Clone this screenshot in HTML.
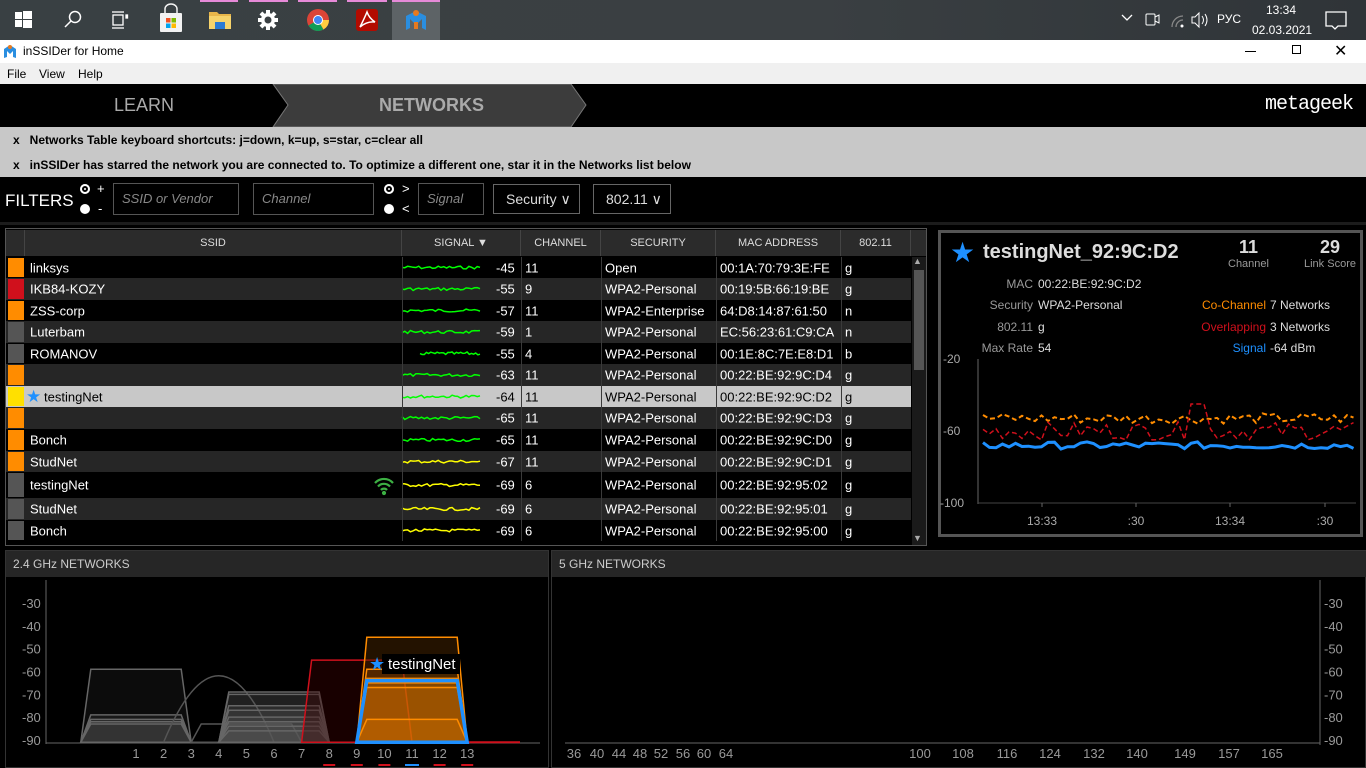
<!DOCTYPE html>
<html><head><meta charset="utf-8">
<style>
*{margin:0;padding:0;box-sizing:border-box}
body{width:1366px;height:768px;overflow:hidden;background:#000;font-family:"Liberation Sans",Arial,sans-serif;position:relative;color:#fff}
.a{position:absolute}
.t{position:absolute;white-space:nowrap}
.hdr{position:absolute;top:230px;height:26px;background:#2b2b2b;color:#ddd;font-size:11px;line-height:26px;text-align:center;border-right:1px solid #444}
.inp{position:absolute;top:183px;height:32px;border:1px solid #555;color:#888;font-style:italic;font-size:13px;line-height:30px;padding-left:8px}
.sel{position:absolute;top:184px;height:30px;border:1px solid #666;color:#ddd;font-size:14px;line-height:28px;padding-left:12px}
.row{position:absolute;left:6px;width:905px;font-size:13px;color:#fff}
.row span{position:absolute;top:50%;transform:translateY(-50%);white-space:nowrap}
</style></head><body>
<div class="a" style="left:0;top:0;width:1366px;height:40px;background:linear-gradient(90deg,#394043,#3a3f42 60%,#2f3438)"></div>
<div class="a" style="left:200px;top:0;width:38px;height:2px;background:#e68ad8"></div>
<div class="a" style="left:249px;top:0;width:39px;height:2px;background:#e68ad8"></div>
<div class="a" style="left:298px;top:0;width:39px;height:2px;background:#e68ad8"></div>
<div class="a" style="left:347px;top:0;width:40px;height:2px;background:#e68ad8"></div>
<div class="a" style="left:392px;top:0;width:48px;height:40px;background:#5d6366;border-top:2px solid #e68ad8"></div>
<svg class="a" style="left:0;top:0" width="460" height="40">
<g fill="#fff"><rect x="15" y="12" width="7" height="7"/><rect x="23" y="11" width="9" height="8"/><rect x="15" y="20" width="7" height="7"/><rect x="23" y="20" width="9" height="8"/></g>
<circle cx="75" cy="17" r="5.5" fill="none" stroke="#fff" stroke-width="1.5"/><line x1="71" y1="21" x2="65" y2="27" stroke="#fff" stroke-width="1.5"/>
<g stroke="#fff" stroke-width="1.3" fill="none"><rect x="113" y="15" width="10" height="10"/><line x1="112" y1="12" x2="124" y2="12"/><line x1="112" y1="28" x2="124" y2="28"/><rect x="126" y="15" width="1.5" height="3" fill="#fff"/></g>
<rect x="160" y="13" width="22" height="19" rx="1" fill="#f2f2f2"/><path d="M165 13 v-4 a6 5 0 0 1 12 0 v4" stroke="#f2f2f2" stroke-width="1.5" fill="none"/>
<rect x="166" y="18" width="4.5" height="4.5" fill="#f25022"/><rect x="171.5" y="18" width="4.5" height="4.5" fill="#7fba00"/><rect x="166" y="23.5" width="4.5" height="4.5" fill="#00a4ef"/><rect x="171.5" y="23.5" width="4.5" height="4.5" fill="#ffb900"/>
<path d="M209 12 h8 l2 2 h12 v15 h-22z" fill="#e8b64a"/><rect x="209" y="16" width="22" height="13" fill="#f6d36b"/><rect x="215" y="22" width="10" height="7" fill="#2a7ad4"/>
<g transform="translate(268,20)" fill="#fff"><circle r="7"/><g><rect x="-2" y="-10" width="4" height="20"/><rect x="-10" y="-2" width="20" height="4"/><rect x="-2" y="-10" width="4" height="20" transform="rotate(45)"/><rect x="-2" y="-10" width="4" height="20" transform="rotate(-45)"/></g><circle r="3.5" fill="#3a4043"/></g>
<circle cx="318" cy="20" r="11" fill="#db4437"/><path d="M318 20 L308.5 25.5 A11 11 0 0 0 323.5 29.5z" fill="#0f9d58"/><path d="M318 20 L323.5 29.5 A11 11 0 0 0 329 20z" fill="#ffcd40"/><circle cx="318" cy="20" r="5" fill="#fff"/><circle cx="318" cy="20" r="4" fill="#4285f4"/>
<rect x="356" y="9" width="22" height="22" rx="3" fill="#b30b00"/><path d="M360 27 q5 -10 7 -15 q2 6 8 10 q-8 -1 -15 5z" fill="none" stroke="#fff" stroke-width="1.5"/>
<path d="M406 30 v-14 l10 -5 l10 5 v14 l-4 -2 v-9 l-6 6 l-6 -6 v9z" fill="#2a8ee0"/><circle cx="416" cy="13" r="3" fill="#e87a1e"/><rect x="414" y="22" width="4" height="7" fill="#e87a1e"/>
</svg>
<svg class="a" style="left:1100px;top:0" width="266" height="40">
<path d="M22 15 l5 5 l5 -5" stroke="#fff" fill="none" stroke-width="1.3"/>
<rect x="46" y="14" width="9" height="11" rx="1" stroke="#fff" fill="none"/><path d="M55 17 l4 -2 v8 l-4 -2" stroke="#fff" fill="none"/>
<path d="M72 27 a11 11 0 0 1 11 -11 M76 27 a7 7 0 0 1 7 -7" stroke="#888" fill="none" stroke-width="1.3"/><circle cx="82" cy="26" r="1.5" fill="#fff"/>
<path d="M92 17 h3 l4 -4 v14 l-4 -4 h-3z" stroke="#fff" fill="none"/><path d="M102 16 q3 4 0 8 M105 14 q4 6 0 12" stroke="#fff" fill="none"/>
<path d="M226 12 h20 v14 h-8 l-3 3 l-3 -3 h-6z" stroke="#fff" fill="none" stroke-width="1.3"/>
</svg>
<div class="t" style="left:1217px;top:12px;font-size:12px;color:#fff">РУС</div>
<div class="t" style="left:1266px;top:3px;font-size:12px;color:#fff">13:34</div>
<div class="t" style="left:1252px;top:23px;font-size:12px;color:#fff">02.03.2021</div>
<div class="a" style="left:0;top:40px;width:1366px;height:23px;background:#fff"></div>
<svg class="a" style="left:3px;top:43px" width="14" height="16"><path d="M1 15 v-9 l6 -4 l6 4 v9 l-3 -1 v-6 l-3 3 l-3 -3 v6z" fill="#2a8ee0"/><circle cx="7" cy="4" r="2" fill="#e87a1e"/></svg>
<div class="t" style="left:23px;top:44px;font-size:12px;color:#000">inSSIDer for Home</div>
<div class="a" style="left:1245px;top:51px;width:11px;height:1px;background:#000"></div>
<div class="a" style="left:1292px;top:45px;width:9px;height:9px;border:1px solid #000"></div>
<div class="t" style="left:1334px;top:41px;font-size:16px;color:#000">✕</div>
<div class="a" style="left:0;top:63px;width:1366px;height:21px;background:#f0f0f0"></div>
<div class="t" style="left:7px;top:67px;font-size:12px;color:#000">File</div>
<div class="t" style="left:39px;top:67px;font-size:12px;color:#000">View</div>
<div class="t" style="left:78px;top:67px;font-size:12px;color:#000">Help</div>
<svg class="a" style="left:0;top:84px" width="1366" height="43"><polygon points="273,0 571,0 586,21 571,43 273,43 288,21" fill="#3c3c3c" stroke="#777" stroke-width="1"/></svg>
<div class="t" style="left:114px;top:95px;font-size:18px;color:#aaa">LEARN</div>
<div class="t" style="left:379px;top:95px;font-size:18px;color:#aaa;font-weight:bold">NETWORKS</div>
<div class="t" style="left:1265px;top:93px;font-size:20px;color:#fff;font-family:'Liberation Mono',monospace;letter-spacing:-1px">metageek</div>
<div class="a" style="left:0;top:127px;width:1366px;height:50px;background:#c8c8c8"></div>
<div class="t" style="left:13px;top:133px;font-size:12px;color:#000;font-weight:bold">x&nbsp;&nbsp;&nbsp;Networks Table keyboard shortcuts: j=down, k=up, s=star, c=clear all</div>
<div class="t" style="left:13px;top:158px;font-size:12px;color:#000;font-weight:bold">x&nbsp;&nbsp;&nbsp;inSSIDer has starred the network you are connected to. To optimize a different one, star it in the Networks list below</div>
<div class="t" style="left:5px;top:191px;font-size:17px;color:#fff">FILTERS</div>
<div class="a" style="left:80px;top:184px;width:10px;height:10px;border-radius:50%;background:#fff;box-shadow:inset 0 0 0 2px #fff,inset 0 0 0 4px #000"></div>
<div class="a" style="left:80px;top:204px;width:10px;height:10px;border-radius:50%;background:#fff"></div>
<div class="t" style="left:97px;top:181px;font-size:13px;color:#fff">+</div>
<div class="t" style="left:98px;top:201px;font-size:13px;color:#fff">-</div>
<div class="inp" style="left:113px;width:126px">SSID or Vendor</div>
<div class="inp" style="left:253px;width:121px">Channel</div>
<div class="a" style="left:384px;top:184px;width:10px;height:10px;border-radius:50%;background:#fff;box-shadow:inset 0 0 0 2px #fff,inset 0 0 0 4px #000"></div>
<div class="a" style="left:384px;top:204px;width:10px;height:10px;border-radius:50%;background:#fff"></div>
<div class="t" style="left:402px;top:181px;font-size:13px;color:#fff">&gt;</div>
<div class="t" style="left:402px;top:201px;font-size:13px;color:#fff">&lt;</div>
<div class="inp" style="left:418px;width:66px">Signal</div>
<div class="sel" style="left:493px;width:87px">Security ∨</div>
<div class="sel" style="left:593px;width:78px">802.11 ∨</div>
<div class="a" style="left:0;top:222px;width:1366px;height:3px;background:#1c1c1c"></div>
<div class="a" style="left:5px;top:228px;width:922px;height:318px;border:1px solid #555;background:#000"></div>
<div class="hdr" style="left:6px;width:19px"></div>
<div class="hdr" style="left:25px;width:377px">SSID</div>
<div class="hdr" style="left:402px;width:119px">SIGNAL ▼</div>
<div class="hdr" style="left:521px;width:80px">CHANNEL</div>
<div class="hdr" style="left:601px;width:115px">SECURITY</div>
<div class="hdr" style="left:716px;width:125px">MAC ADDRESS</div>
<div class="hdr" style="left:841px;width:70px">802.11</div>
<div class="hdr" style="left:911px;width:15px;border:none"></div>
<div id="rows"></div>
<div class="a" style="left:912px;top:257px;width:14px;height:288px;background:#1a1a1a"></div>
<div class="a" style="left:914px;top:270px;width:10px;height:100px;background:#555"></div>
<div class="t" style="left:913px;top:256px;font-size:9px;color:#aaa">▲</div>
<div class="t" style="left:913px;top:533px;font-size:9px;color:#aaa">▼</div>
<div class="a" style="left:938px;top:230px;width:425px;height:307px;border:3px solid #555;background:#000"></div>
<div class="t" style="left:950px;top:236px;font-size:28px;color:#1e90ff">★</div>
<div class="t" style="left:983px;top:241px;font-size:20px;font-weight:bold;color:#ddd">testingNet_92:9C:D2</div>
<div class="t" style="left:1239px;top:237px;font-size:18px;font-weight:bold;color:#ddd">11</div>
<div class="t" style="left:1228px;top:258px;font-size:11px;color:#999">Channel</div>
<div class="t" style="left:1320px;top:237px;font-size:18px;font-weight:bold;color:#ddd">29</div>
<div class="t" style="left:1304px;top:258px;font-size:11px;color:#999">Link Score</div>
<div class="t" style="left:1005px;top:277px;font-size:12px;color:#999;width:28px;text-align:right">MAC</div>
<div class="t" style="left:1038px;top:277px;font-size:12px;color:#ddd">00:22:BE:92:9C:D2</div>
<div class="t" style="left:973px;top:298px;font-size:12px;color:#999;width:60px;text-align:right">Security</div>
<div class="t" style="left:1038px;top:298px;font-size:12px;color:#ddd">WPA2-Personal</div>
<div class="t" style="left:973px;top:320px;font-size:12px;color:#999;width:60px;text-align:right">802.11</div>
<div class="t" style="left:1038px;top:320px;font-size:12px;color:#ddd">g</div>
<div class="t" style="left:963px;top:341px;font-size:12px;color:#999;width:70px;text-align:right">Max Rate</div>
<div class="t" style="left:1038px;top:341px;font-size:12px;color:#ddd">54</div>
<div class="t" style="left:1166px;top:298px;font-size:12px;color:#ff8c00;width:100px;text-align:right">Co-Channel</div>
<div class="t" style="left:1270px;top:298px;font-size:12px;color:#ddd">7 Networks</div>
<div class="t" style="left:1166px;top:320px;font-size:12px;color:#d0101c;width:100px;text-align:right">Overlapping</div>
<div class="t" style="left:1270px;top:320px;font-size:12px;color:#ddd">3 Networks</div>
<div class="t" style="left:1166px;top:341px;font-size:12px;color:#1e90ff;width:100px;text-align:right">Signal</div>
<div class="t" style="left:1270px;top:341px;font-size:12px;color:#ddd">-64 dBm</div>
<svg id="rg" class="a" style="left:938px;top:340px" width="425" height="200"></svg>
<div class="a" style="left:5px;top:550px;width:544px;height:218px;border:1px solid #333;background:#000"></div>
<div class="a" style="left:6px;top:551px;width:542px;height:26px;background:#262626"></div>
<div class="t" style="left:13px;top:557px;font-size:12px;color:#ccc">2.4 GHz NETWORKS</div>
<div class="a" style="left:551px;top:550px;width:815px;height:218px;border:1px solid #333;background:#000"></div>
<div class="a" style="left:552px;top:551px;width:814px;height:26px;background:#262626"></div>
<div class="t" style="left:559px;top:557px;font-size:12px;color:#ccc">5 GHz NETWORKS</div>
<svg id="g24" class="a" style="left:0;top:0" width="1366" height="768"></svg>
<script>
var R=[[257,21,'#ff8c00','linksys','#0f0',-45,'11','Open','00:1A:70:79:3E:FE','g',0],
[278,22,'#d0101c','IKB84-KOZY','#0f0',-55,'9','WPA2-Personal','00:19:5B:66:19:BE','g',1],
[300,21,'#ff8c00','ZSS-corp','#0f0',-57,'11','WPA2-Enterprise','64:D8:14:87:61:50','n',0],
[321,22,'#555','Luterbam','#0f0',-59,'1','WPA2-Personal','EC:56:23:61:C9:CA','n',1],
[343,21,'#555','ROMANOV','#0f0',-55,'4','WPA2-Personal','00:1E:8C:7E:E8:D1','b',0],
[364,22,'#ff8c00','','#0f0',-63,'11','WPA2-Personal','00:22:BE:92:9C:D4','g',1],
[386,21,'#ffe000','testingNet','#0f0',-64,'11','WPA2-Personal','00:22:BE:92:9C:D2','g',2],
[407,22,'#ff8c00','','#0f0',-65,'11','WPA2-Personal','00:22:BE:92:9C:D3','g',1],
[429,22,'#ff8c00','Bonch','#0f0',-65,'11','WPA2-Personal','00:22:BE:92:9C:D0','g',0],
[451,21,'#ff8c00','StudNet','#ff0',-67,'11','WPA2-Personal','00:22:BE:92:9C:D1','g',1],
[472,26,'#555','testingNet','#ff0',-69,'6','WPA2-Personal','00:22:BE:92:95:02','g',0],
[498,22,'#555','StudNet','#ff0',-69,'6','WPA2-Personal','00:22:BE:92:95:01','g',1],
[520,21,'#555','Bonch','#ff0',-69,'6','WPA2-Personal','00:22:BE:92:95:00','g',0]];
var s=7;function rnd(){s=(s*9301+49297)%233280;return s/233280;}
var h='';
R.forEach(function(r,i){
 var sel=r[10]==2,bg=sel?'#c8c8c8':(r[10]?'#262626':'#000'),fc=sel?'#000':'#fff';
 var y=r[0],ht=r[1];
 h+='<div class="row" style="top:'+y+'px;height:'+ht+'px;background:'+bg+';color:'+fc+'">';
 h+='<div style="position:absolute;left:2px;top:1px;width:16px;height:'+(ht-2)+'px;background:'+r[2]+'"></div>';
 if(sel)h+='<span style="left:20px;color:#1e90ff;font-size:17px">★</span>';
 h+='<span style="left:'+(sel?38:24)+'px">'+r[3]+'</span>';
 var sx=(i==4)?18:0,pts=[],mid=ht/2;
 for(var k=0;k<=28;k++){var x=396+sx+k*(78-sx)/28;pts.push(x.toFixed(1)+','+(mid+(rnd()-0.5)*3).toFixed(1));}
 h+='<svg style="position:absolute;left:0;top:0" width="480" height="'+ht+'"><polyline points="'+pts.join(' ')+'" fill="none" stroke="'+r[4]+'" stroke-width="1.5"/>';
 if(i==10)h+='<g transform="translate(378,'+mid+')" fill="none" stroke="#3cb043" stroke-width="2.2"><path d="M-9 -2 a12 12 0 0 1 18 0"/><path d="M-6 1.5 a8 8 0 0 1 12 0"/><path d="M-3 5 a4 4 0 0 1 6 0"/><circle cy="8" r="1" fill="#3cb043"/></g>';
 h+='</svg>';
 h+='<span style="left:490px">'+r[5]+'</span><span style="left:519px">'+r[6]+'</span><span style="left:599px">'+r[7]+'</span><span style="left:714px">'+r[8]+'</span><span style="left:839px">'+r[9]+'</span>';
 h+='<div style="position:absolute;left:396px;top:0;width:1px;height:100%;background:#3a3a3a"></div><div style="position:absolute;left:515px;top:0;width:1px;height:100%;background:#3a3a3a"></div><div style="position:absolute;left:595px;top:0;width:1px;height:100%;background:#3a3a3a"></div><div style="position:absolute;left:710px;top:0;width:1px;height:100%;background:#3a3a3a"></div><div style="position:absolute;left:835px;top:0;width:1px;height:100%;background:#3a3a3a"></div>';
 h+='</div>';
});
document.getElementById('rows').innerHTML=h;
var g='';var oy=340;
function Y(d){return 359+(-20-d)*1.8-oy;}
g+='<line x1="40" y1="19" x2="40" y2="164" stroke="#666"/><line x1="40" y1="163" x2="418" y2="163" stroke="#444"/>';
g+='<text x="5" y="23" fill="#aaa" font-size="12" font-family="Liberation Sans">-20</text><text x="5" y="95" fill="#aaa" font-size="12" font-family="Liberation Sans">-60</text><text x="2" y="167" fill="#aaa" font-size="12" font-family="Liberation Sans">-100</text>';
[[104,'13:33'],[198,':30'],[292,'13:34'],[387,':30']].forEach(function(t){g+='<line x1="'+t[0]+'" y1="163" x2="'+t[0]+'" y2="167" stroke="#666"/><text x="'+t[0]+'" y="185" fill="#aaa" font-size="12" text-anchor="middle" font-family="Liberation Sans">'+t[1]+'</text>';});
function line(base,amp,col,dash,w,spike){var p=[];for(var x=45;x<=418;x+=6.5){var d=base+(rnd()-0.5)*amp;if(spike&&x>250&&x<272)d=-45;p.push(x.toFixed(1)+','+Y(d).toFixed(1));}return '<polyline points="'+p.join(' ')+'" fill="none" stroke="'+col+'" stroke-width="'+w+'" '+(dash?'stroke-dasharray="5,3"':'')+'/>';}
g+=line(-53,6,'#ff8c00',1,2,0);g+=line(-60,10,'#d0101c',1,1.5,1);g+=line(-68,4,'#1e90ff',0,3,0);
document.getElementById('rg').innerHTML=g;
var c='',F='font-family="Liberation Sans" font-size="13" fill="#999"';
function cx(ch){return 136+(ch-1)*27.6;}function cy(d){return 603+(-30-d)*2.283;}
c+='<line x1="46" y1="580" x2="46" y2="744" stroke="#666"/><line x1="46" y1="743" x2="540" y2="743" stroke="#666"/>';
for(var d=-30;d>=-90;d-=10)c+='<text x="22" y="'+(cy(d)+5)+'" '+F+'>'+d+'</text>';
for(var ch=1;ch<=13;ch++)c+='<text x="'+cx(ch)+'" y="758" text-anchor="middle" '+F+'>'+ch+'</text>';
[8,9,10,12,13].forEach(function(ch){c+='<line x1="'+(cx(ch)-6)+'" y1="765" x2="'+(cx(ch)+6)+'" y2="765" stroke="#d0101c" stroke-width="2"/>';});
c+='<line x1="'+(cx(11)-7)+'" y1="765" x2="'+(cx(11)+7)+'" y2="765" stroke="#1e90ff" stroke-width="2"/>';
function trap(ch,d,st,fill,w){var l=cx(ch-2),r=cx(ch+2),t=cy(d),b=cy(-91);return '<polygon points="'+l+','+b+' '+(l+10)+','+t+' '+(r-10)+','+t+' '+r+','+b+'" fill="'+fill+'" stroke="'+st+'" stroke-width="'+(w||1.5)+'"/>';}
c+=trap(1,-59,'#666','rgba(80,80,80,0.15)');c+=trap(1,-79,'#666','rgba(80,80,80,0.2)');c+=trap(1,-81,'#666','rgba(80,80,80,0.2)');c+=trap(1,-82,'#666','rgba(80,80,80,0.2)');c+=trap(1,-83,'#666','rgba(80,80,80,0.2)');
c+='<path d="M'+cx(2)+','+cy(-91)+' Q'+cx(4)+','+(cy(-59)-60)+' '+cx(6)+','+cy(-91)+'" fill="none" stroke="#555" stroke-width="1.5"/>';
c+=trap(5,-83,'#555','none');
[-69,-70,-75,-77,-80,-82,-84,-86].forEach(function(d){c+=trap(6,d,'#666','rgba(90,90,90,0.2)');});
c+=trap(9,-55,'#d0101c','rgba(60,0,0,0.4)');
c+='<line x1="'+cx(13)+'" y1="'+cy(-91)+'" x2="520" y2="'+cy(-91)+'" stroke="#d0101c" stroke-width="2"/>';
[-45,-59,-63,-65,-67,-81].forEach(function(d,i){c+=trap(11,d,'#ff8c00',i==0?'rgba(70,35,0,0.5)':'rgba(255,140,0,0.18)');});
c+=trap(11,-64,'#1e90ff','none',3.5);
c+='<rect x="382" y="654" width="78" height="20" fill="#000"/><text x="369" y="670" fill="#1e90ff" font-size="18" font-family="DejaVu Sans">★</text><text x="388" y="669" fill="#fff" font-size="15" font-family="Liberation Sans">testingNet</text>';
c+='<line x1="1320" y1="580" x2="1320" y2="745" stroke="#666"/><line x1="565" y1="743" x2="1320" y2="743" stroke="#666"/>';
for(var d=-30;d>=-90;d-=10)c+='<text x="1324" y="'+(cy(d)+5)+'" '+F+'>'+d+'</text>';
[[36,574],[40,597],[44,619],[48,640],[52,661],[56,683],[60,704],[64,726],[100,920],[108,963],[116,1007],[124,1050],[132,1094],[140,1137],[149,1185],[157,1229],[165,1272]].forEach(function(t){c+='<text x="'+t[1]+'" y="758" text-anchor="middle" '+F+'>'+t[0]+'</text>';});
document.getElementById('g24').innerHTML=c;
</script>
</body></html>
